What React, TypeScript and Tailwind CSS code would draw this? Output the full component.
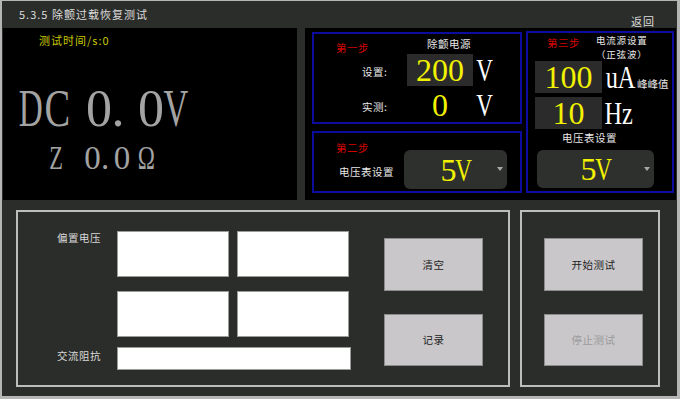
import clsx from 'clsx';

const CJK = "font-[family-name:'Noto_Sans_CJK_SC',sans-serif]";
const SERIF = "font-[family-name:'Liberation_Serif',serif]";

// one character (or a short run) centred in a fixed cell, optionally squeezed
function Glyph({ ch, cell, sx }: { ch: string; cell: string; sx?: string }) {
    return (
        <span className={clsx('inline-flex shrink-0 justify-center', cell)}>
            <span className={clsx('inline-block whitespace-nowrap', sx)}>{ch}</span>
        </span>
    );
}

function Label({ children, className }: { children: React.ReactNode; className?: string }) {
    return (
        <span className={clsx(CJK, 'whitespace-nowrap text-[10.5px] leading-[14px] tracking-[0.5px]', className)}>
            {children}
        </span>
    );
}

function Step({ children, className }: { children: React.ReactNode; className?: string }) {
    return <Label className={clsx('text-[#d40000]', className)}>{children}</Label>;
}

function ValueBox({ value, className }: { value: string; className?: string }) {
    return (
        <div
            className={clsx(
                SERIF,
                'flex h-[32px] shrink-0 items-center justify-center bg-[#2b2b2b] text-[32px] leading-[32px] text-[#f2f200]',
                className
            )}
        >
            {value}
        </div>
    );
}

function Select({ className }: { className?: string }) {
    return (
        <div className={clsx('relative flex shrink-0 items-center justify-center rounded-md bg-[#2e302d]', className)}>
            <span className={clsx(SERIF, 'flex text-[32px] leading-[32px] text-[#f2f200]')}>
                5<Glyph ch="V" cell="w-[14px]" sx="scale-x-[0.72]" />
            </span>
            <span className="absolute right-[4px] top-[17px] h-0 w-0 border-x-[3px] border-t-[4px] border-x-transparent border-t-[#a8a8a8]" />
        </div>
    );
}

function Field({ className }: { className?: string }) {
    return <div className={clsx('shrink-0 border border-[#9a9a9a] bg-white', className)} />;
}

function Button({ text, dim = false, className }: { text: string; dim?: boolean; className?: string }) {
    return (
        <div
            className={clsx(
                CJK,
                'flex w-[99px] shrink-0 items-center justify-center border border-[#8c8c8c] bg-[#c9c7ca] text-[10.5px] tracking-[0.5px]',
                dim ? 'text-[#9a9a9a]' : 'text-[#222222]',
                className
            )}
        >
            {text}
        </div>
    );
}

export default function App() {
    return (
        <div className="flex h-[399px] w-[680px] flex-col overflow-hidden border-b-[3px] border-l-2 border-r-[3px] border-t border-[#b5b5b5] bg-[#2b2d2a]">
            {/* title bar */}
            <div className="flex h-[27px] shrink-0 items-start justify-between">
                <span className={clsx(CJK, 'ml-[17px] mt-[6px] text-[11px] leading-[14px] tracking-[1px] text-[#dcdcdc]')}>
                    5.3.5 除颤过载恢复测试
                </span>
                <span className={clsx(CJK, 'mr-[22px] mt-[13px] text-[11px] leading-[14px] tracking-[1px] text-[#dcdcdc]')}>
                    返回
                </span>
            </div>

            {/* readout + settings */}
            <div className="flex h-[172px] shrink-0 gap-[8px] pl-[1px]">
                <div className="flex w-[294px] flex-col bg-black">
                    <span className={clsx(CJK, 'ml-[36px] mt-[5px] text-[11px] leading-[14px] tracking-[1px] text-[#c8c800]')}>
                        测试时间/s:0
                    </span>
                    <div className={clsx(SERIF, 'ml-[15px] mt-[36px] flex h-[52px] text-[52px] leading-[52px] text-[#a3a3a3]')}>
                        <Glyph ch="D" cell="w-[26px]" sx="scale-x-[0.64]" />
                        <Glyph ch="C" cell="w-[26px]" sx="scale-x-[0.74]" />
                        <span className="w-[16px]" />
                        <Glyph ch="0" cell="w-[26px]" />
                        <Glyph ch="." cell="w-[12px]" />
                        <span className="w-[14px]" />
                        <Glyph ch="0" cell="w-[26px]" />
                        <Glyph ch="V" cell="w-[24px]" sx="scale-x-[0.66]" />
                    </div>
                    <div className={clsx(SERIF, 'ml-[44px] mt-[7px] flex h-[33px] text-[33px] leading-[33px] text-[#a3a3a3]')}>
                        <Glyph ch="Z" cell="w-[19px]" sx="scale-x-[0.68]" />
                        <span className="w-[18px]" />
                        <Glyph ch="0" cell="w-[17px]" />
                        <Glyph ch="." cell="w-[8px]" />
                        <span className="w-[4px]" />
                        <Glyph ch="0" cell="w-[18px]" />
                        <span className="w-[5px]" />
                        <Glyph ch="Ω" cell="w-[21px]" sx="scale-x-[0.7]" />
                    </div>
                </div>

                <div className="flex w-[371px] gap-[4px] bg-black pl-[7px] pt-[3px]">
                    <div className="mt-[1px] flex w-[210px] flex-col gap-[7px]">
                        {/* step 1 */}
                        <div className="flex h-[92px] flex-col border-2 border-[#0c0c9e]">
                            <div className="flex h-[20px] items-start">
                                <Step className="ml-[22px] mt-[7px] w-[91px]">第一步</Step>
                                <Label className="mt-[3px] text-[#e8e8e8]">除颤电源</Label>
                            </div>
                            <div className="flex h-[32px] items-center">
                                <Label className="ml-[48px] mt-[4px] w-[45px] text-[#e8e8e8]">设置:</Label>
                                <ValueBox value="200" className="w-[66px]" />
                                <span className={clsx(SERIF, 'ml-[4px] flex text-[32px] leading-[32px] text-white')}>
                                    <Glyph ch="V" cell="w-[16px]" sx="scale-x-[0.72]" />
                                </span>
                            </div>
                            <div className="mt-[3px] flex h-[32px] items-center">
                                <Label className="ml-[48px] mt-[4px] w-[45px] text-[#e8e8e8]">实测:</Label>
                                <div className={clsx(SERIF, 'flex w-[66px] justify-center text-[32px] leading-[32px] text-[#f2f200]')}>0</div>
                                <span className={clsx(SERIF, 'ml-[4px] flex text-[32px] leading-[32px] text-white')}>
                                    <Glyph ch="V" cell="w-[16px]" sx="scale-x-[0.72]" />
                                </span>
                            </div>
                        </div>

                        {/* step 2 */}
                        <div className="flex h-[62px] border-2 border-[#0c0c9e]">
                            <div className="flex w-[90px] flex-col">
                                <Step className="ml-[22px] mt-[8px]">第二步</Step>
                                <Label className="ml-[25px] mt-[10px] text-[#e8e8e8]">电压表设置</Label>
                            </div>
                            <Select className="mt-[17px] h-[39px] w-[103px]" />
                        </div>
                    </div>

                    {/* step 3 */}
                    <div className="flex h-[162px] w-[148px] flex-col border-2 border-[#0c0c9e]">
                        <div className="flex h-[28px] items-start">
                            <Step className="ml-[19px] mt-[3px] w-[49px]">第三步</Step>
                            <div className={clsx(CJK, 'flex flex-col items-center whitespace-nowrap text-[9.5px] leading-[14px] tracking-[0.8px] text-[#e8e8e8]')}>
                                <span>电流源设置</span>
                                <span>（正弦波）</span>
                            </div>
                        </div>
                        <div className="flex h-[32px] items-center">
                            <ValueBox value="100" className="ml-[7px] w-[67px]" />
                            <span className={clsx(SERIF, 'ml-[4px] flex text-[32px] leading-[32px] text-white')}>
                                <Glyph ch="uA" cell="w-[30px]" sx="scale-x-[0.76]" />
                            </span>
                            <Label className="mb-[2px] ml-[1px] self-end tracking-normal text-[#e8e8e8]">峰峰值</Label>
                        </div>
                        <div className="mt-[4px] flex h-[32px] items-center">
                            <ValueBox value="10" className="ml-[7px] w-[67px]" />
                            <span className={clsx(SERIF, 'ml-[3px] flex text-[32px] leading-[32px] text-white')}>
                                <Glyph ch="Hz" cell="w-[28px]" sx="scale-x-[0.76]" />
                            </span>
                        </div>
                        <Label className="ml-[34px] mt-[2px] text-[#e8e8e8]">电压表设置</Label>
                        <Select className="ml-[9px] mt-[5px] h-[38px] w-[117px]" />
                    </div>
                </div>
            </div>

            {/* inputs + actions */}
            <div className="flex flex-1 gap-[10px] pl-[14px] pt-[10px]">
                <div className="flex h-[177px] w-[494px] border-2 border-[#bdbdbd]">
                    <div className="flex w-[99px] flex-col pl-[39px] pt-[19px]">
                        <Label className="text-[#d8d8d8]">偏置电压</Label>
                        <Label className="mt-[104px] text-[#d8d8d8]">交流阻抗</Label>
                    </div>
                    <div className="flex flex-col pt-[19px]">
                        <div className="flex gap-[8px]">
                            <Field className="h-[46px] w-[112px]" />
                            <Field className="h-[46px] w-[112px]" />
                        </div>
                        <div className="mt-[14px] flex gap-[8px]">
                            <Field className="h-[46px] w-[112px]" />
                            <Field className="h-[46px] w-[112px]" />
                        </div>
                        <Field className="mt-[10px] h-[23px] w-[234px]" />
                    </div>
                    <div className="ml-[33px] flex flex-col gap-[23px] pt-[26px]">
                        <Button text="清空" className="h-[53px]" />
                        <Button text="记录" className="h-[52px]" />
                    </div>
                </div>

                <div className="flex h-[177px] w-[140px] flex-col gap-[23px] border-2 border-[#bdbdbd] pl-[22px] pt-[26px]">
                    <Button text="开始测试" className="h-[53px]" />
                    <Button text="停止测试" dim className="h-[52px]" />
                </div>
            </div>
        </div>
    );
}
